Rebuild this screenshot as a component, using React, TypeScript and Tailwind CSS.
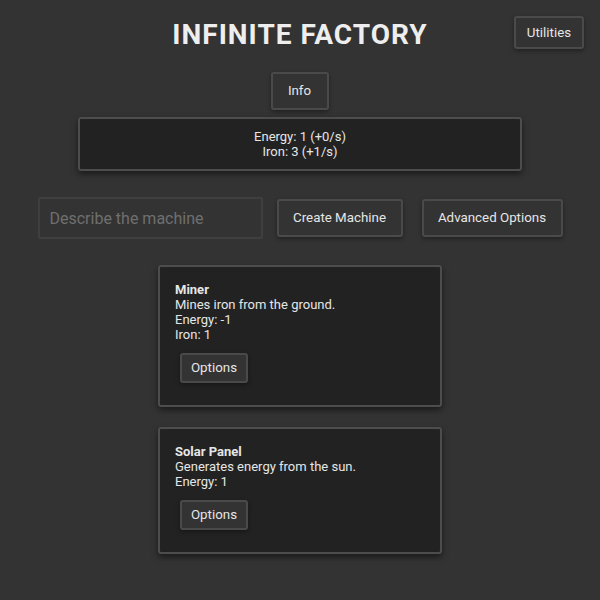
import React from "react";

const btn =
  "bg-[#333333] border-2 border-[#4a4a4a] text-[#e6e6e6] text-[13.333px] rounded-[3px] shadow-[0_2px_4px_rgba(0,0,0,0.35)]";

function Card({ title, desc, lines }: { title: string; desc: string; lines: string[] }) {
  return (
    <div className="w-[284px] bg-[#222222] border-2 border-[#4d4d4d] rounded-[3px] shadow-[0_3px_6px_rgba(0,0,0,0.5)] pt-[15px] pb-[22px] px-[15px] text-[13px] leading-[15px] text-[#e6e6e6]">
      <div className="font-bold">{title}</div>
      <div>{desc}</div>
      {lines.map((l) => (
        <div key={l}>{l}</div>
      ))}
      <button className={`${btn} ml-[5px] mt-[11px] h-[30px] w-[68px] leading-[26px]`}>Options</button>
    </div>
  );
}

export default function App() {
  return (
    <div
      className="relative min-h-[600px] w-full bg-[#333333] flex flex-col items-center pt-[16px]"
      style={{ fontFamily: "Roboto, 'Liberation Sans', sans-serif" }}
    >
      <button className={`${btn} absolute top-[16px] right-[16px] h-[33px] w-[70px]`}>Utilities</button>
      <h1 className="h-[38px] leading-[38px] text-[28px] font-bold tracking-[1px] text-[#eeeeee]">
        INFINITE FACTORY
      </h1>
      <button className={`${btn} mt-[18px] h-[38px] w-[58px] ml-[-1px]`}>Info</button>
      <div className="mt-[7px] w-[444px] h-[54px] bg-[#222222] border-2 border-[#4d4d4d] rounded-[3px] shadow-[0_3px_6px_rgba(0,0,0,0.5)] flex flex-col items-center justify-center text-[13px] leading-[15px] text-[#e6e6e6]">
        <div>Energy: 1 (+0/s)</div>
        <div>Iron: 3 (+1/s)</div>
      </div>
      <div className="mt-[26px] flex items-center">
        <input
          placeholder="Describe the machine"
          className="w-[225px] h-[42px] bg-[#333333] border-2 border-[#3f3f3f] rounded-[2px] px-[10px] text-[16px] text-[#e6e6e6] placeholder:text-[#6f6f6f] outline-none"
        />
        <button className={`${btn} ml-[14px] w-[126px] h-[38px]`}>Create Machine</button>
        <button className={`${btn} ml-[19px] w-[141px] h-[38px]`}>Advanced Options</button>
      </div>
      <div className="mt-[26px] flex flex-col items-center gap-[20px] pb-[48px]">
        <Card title="Miner" desc="Mines iron from the ground." lines={["Energy: -1", "Iron: 1"]} />
        <Card title="Solar Panel" desc="Generates energy from the sun." lines={["Energy: 1"]} />
      </div>
    </div>
  );
}
